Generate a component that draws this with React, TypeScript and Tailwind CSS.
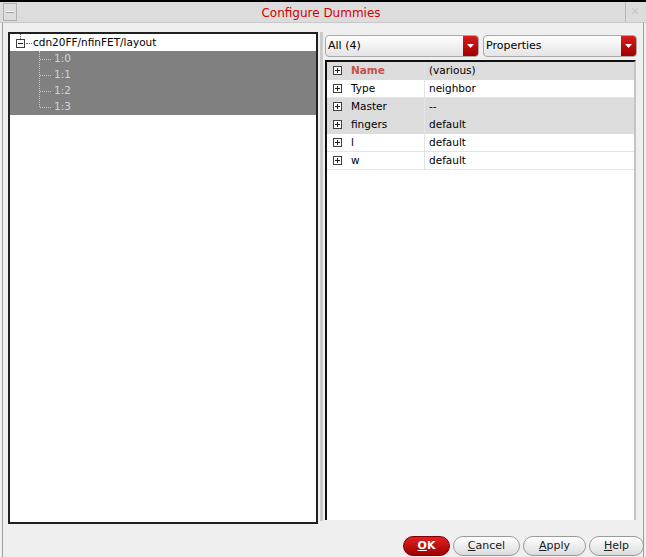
import React from "react";

const font = { fontFamily: '"DejaVu Sans", "Liberation Sans", sans-serif' };

function BoxIcon({ plus }: { plus: boolean }) {
  return (
    <svg width="9" height="9" viewBox="0 0 9 9" className="shrink-0">
      <rect x="0.5" y="0.5" width="8" height="8" fill="white" stroke="#404040" />
      <line x1="2" y1="4.5" x2="7" y2="4.5" stroke="#202020" />
      {plus && <line x1="4.5" y1="2" x2="4.5" y2="7" stroke="#202020" />}
    </svg>
  );
}

function Combo({ label, w }: { label: string; w: string }) {
  return (
    <div
      className={`${w} h-[22px] flex items-stretch rounded-[4px] border border-[#a8a8a8] bg-gradient-to-b from-[#ffffff] to-[#e4e4e4] overflow-hidden`}
    >
      <div className="flex-1 flex items-center pl-[2px] pt-[1px] text-[11px] text-black">{label}</div>
      <div className="w-[15px] flex items-center justify-center bg-gradient-to-b from-[#d81c1c] to-[#a00000]">
        <svg width="7" height="4" viewBox="0 0 7 4">
          <polygon points="0,0 7,0 3.5,4" fill="white" />
        </svg>
      </div>
    </div>
  );
}

const rows = [
  { name: "Name", value: "(various)", gray: true, bold: true },
  { name: "Type", value: "neighbor", gray: false },
  { name: "Master", value: "--", gray: true },
  { name: "fingers", value: "default", gray: true },
  { name: "l", value: "default", gray: false },
  { name: "w", value: "default", gray: false },
];

function Btn({ u, rest, w, primary }: { u: string; rest: string; w: string; primary?: boolean }) {
  return (
    <div
      className={`${w} h-[20px] rounded-full flex items-center justify-center text-[11px] ${
        primary
          ? "bg-gradient-to-b from-[#e02020] to-[#a00000] border border-[#800000] text-white font-bold"
          : "bg-gradient-to-b from-[#ffffff] to-[#dcdcdc] border border-[#9a9a9a] text-[#202020]"
      }`}
    >
      <span>
        <span className="underline">{u}</span>
        {rest}
      </span>
    </div>
  );
}

export default function App() {
  return (
    <div className="w-[646px] h-[557px] bg-[#efefef] flex flex-col overflow-hidden" style={font}>
      {/* Title bar */}
      <div className="h-[23px] border-t-2 border-black bg-[#dcdcdc] flex items-stretch border-b border-b-[#c8c8c8]">
        <div className="w-[3px]" />
        <div className="w-[14px] my-[1px] border border-[#b0b0b0] flex items-center justify-center">
          <div className="w-[8px] h-[2px] bg-white border-b border-[#a0a0a0]" />
        </div>
        <div className="flex-1 flex items-center justify-center pt-[1px] text-[12px] text-[#d40000] border-r border-[#b8b8b8]">
          Configure Dummies
        </div>
        <div className="w-[18px] flex items-center justify-center text-[#c8c8c8] text-[11px]">
          ✕
        </div>
        <div className="w-[2px]" />
      </div>

      {/* Body */}
      <div className="flex-1 flex flex-col ml-[2px] mr-[2px] border-l border-r border-[#a0a0a0]">
        <div className="flex pt-[9px] pl-[5px]">
          {/* Tree */}
          <div className="w-[310px] h-[492px] border-2 border-[#202020] bg-white pt-[1px]">
            <div className="h-[16px] flex items-center text-[10.5px] text-black relative">
              <div className="w-[6px]" />
              <div className="relative flex items-center">
                <div className="absolute left-[4px] bottom-[9px] h-[5px] border-l border-dotted border-[#606060]" />
                <BoxIcon plus={false} />
              </div>
              <div className="w-[6px] border-t border-dotted border-[#606060] ml-[1px]" />
              <span className="ml-[1px]">cdn20FF/nfinFET/layout</span>
            </div>
            <div className="bg-[#808080] relative">
              <div className="absolute left-[29px] top-0 h-[56px] border-l border-dotted border-[#c8c8c8]" />
              {["1:0", "1:1", "1:2", "1:3"].map((t) => (
                <div key={t} className="h-[16px] flex items-center text-[10.5px] text-[#d4d4d4]">
                  <div className="w-[30px]" />
                  <div className="w-[11px] border-t border-dotted border-[#c8c8c8]" />
                  <span className="ml-[3px]">{t}</span>
                </div>
              ))}
            </div>
          </div>

          {/* Splitter */}
          <div className="w-[7px] flex justify-center">
            <div className="w-[3px] h-[489px] bg-[#cacaca]" />
          </div>

          {/* Right pane */}
          <div className="w-[312px] flex flex-col pt-[3px]">
            <div className="flex gap-[4px]">
              <Combo label="All (4)" w="w-[154px]" />
              <Combo label="Properties" w="w-[154px]" />
            </div>
            <div className="mt-[3px] h-[460px] w-[311px] border-l-2 border-t-2 border-[#101010] border-r-2 border-r-[#c4c4c4] bg-white">
              {rows.map((r) => (
                <div
                  key={r.name}
                  className={`h-[18px] flex items-stretch text-[10.5px] border-b ${
                    r.gray ? "bg-[#dcdcdc] border-[#dcdcdc]" : "bg-white border-[#e4e4e4]"
                  }`}
                >
                  <div className="w-[98px] flex items-center border-r border-[#e4e4e4]">
                    <div className="w-[6px]" />
                    <BoxIcon plus={true} />
                    <span className={`ml-[9px] ${r.bold ? "font-bold text-[#c8504a]" : "text-black"}`}>{r.name}</span>
                  </div>
                  <div className="flex-1 flex items-center pl-[4px] text-black">{r.value}</div>
                </div>
              ))}
            </div>
          </div>
        </div>

        {/* Buttons */}
        <div className="flex justify-end gap-[3px] mr-[-1px] mt-[12px]">
          <Btn u="O" rest="K" w="w-[47px]" primary />
          <Btn u="C" rest="ancel" w="w-[67px]" />
          <Btn u="A" rest="pply" w="w-[63px]" />
          <Btn u="H" rest="elp" w="w-[55px]" />
        </div>
      </div>
    </div>
  );
}
